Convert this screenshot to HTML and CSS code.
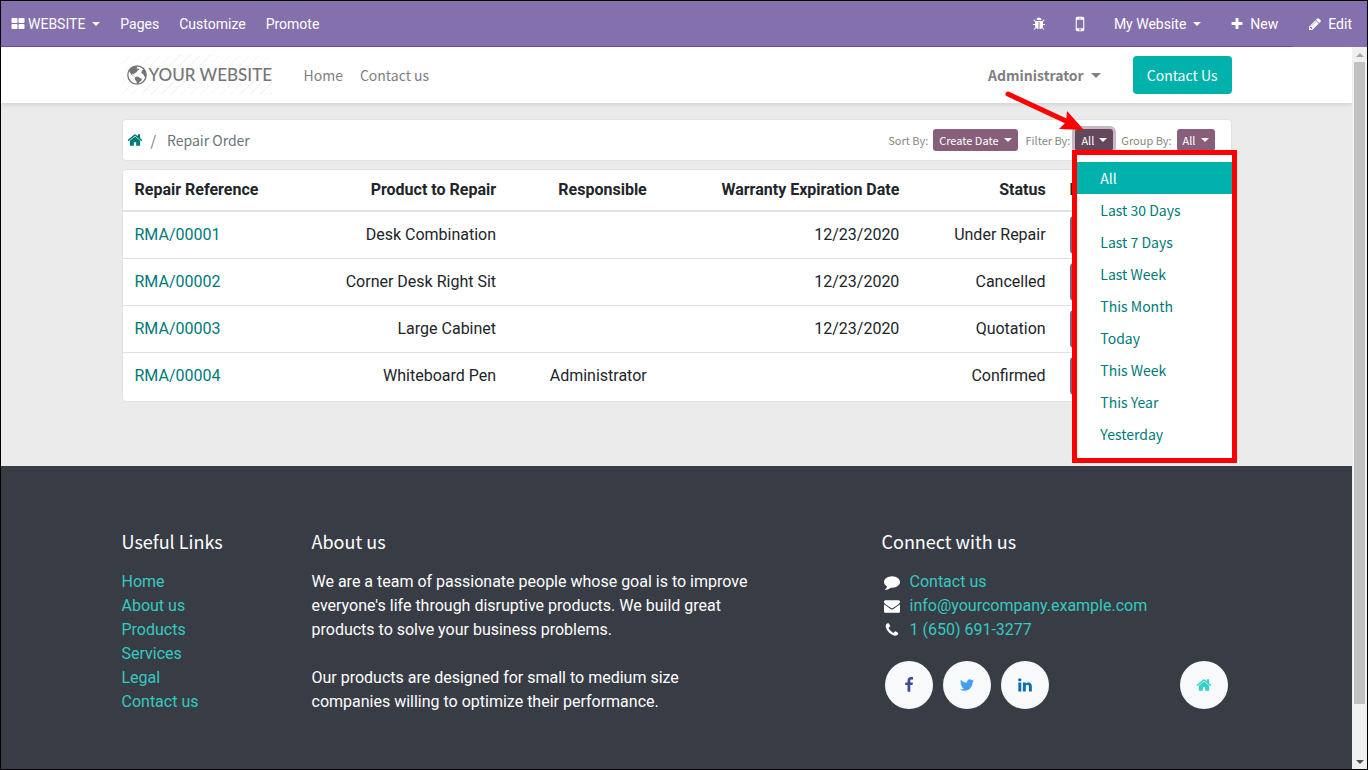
FILE: index.html
```html
<!DOCTYPE html>
<html lang="en">
<head>
<meta charset="utf-8">
<meta name="viewport" content="width=device-width, initial-scale=1">
<title>Repair Order | My Website</title>
<link rel="stylesheet" href="styles.css">
</head>
<body>
<svg class="sprite" aria-hidden="true">
  <symbol id="i-grid" viewBox="0 0 1792 1792"><path d="M832 1024v384q0 52-38 90t-90 38h-512q-52 0-90-38t-38-90v-384q0-52 38-90t90-38h512q52 0 90 38t38 90zm0-768v384q0 52-38 90t-90 38h-512q-52 0-90-38t-38-90v-384q0-52 38-90t90-38h512q52 0 90 38t38 90zm896 768v384q0 52-38 90t-90 38h-512q-52 0-90-38t-38-90v-384q0-52 38-90t90-38h512q52 0 90 38t38 90zm0-768v384q0 52-38 90t-90 38h-512q-52 0-90-38t-38-90v-384q0-52 38-90t90-38h512q52 0 90 38t38 90z"/></symbol>
  <symbol id="i-bug" viewBox="0 0 1792 1792"><path d="M1696 960q0 26-19 45t-45 19h-224q0 171-67 290l208 209q19 19 19 45t-19 45q-18 19-45 19t-45-19l-198-197q-5 5-15 13t-42 28.500-65 36.500-82 29-97 13v-896h-128v896q-51 0-101.500-13.500t-87-33-66-39-43.500-32.500l-15-14-183 207q-20 21-48 21-24 0-43-16-19-18-20.500-44.500t15.500-46.500l202-227q-58-114-58-274h-224q-26 0-45-19t-19-45 19-45 45-19h224v-294l-173-173q-19-19-19-45t19-45 45-19 45 19l173 173h844l173-173q19-19 45-19t45 19 19 45-19 45l-173 173v294h224q26 0 45 19t19 45zm-480-576h-640q0-133 93.500-226.500t226.500-93.500 226.500 93.500 93.500 226.500z"/></symbol>
  <symbol id="i-mobile" viewBox="0 0 1792 1792"><path d="M976 1408q0-33-23.500-56.500t-56.500-23.500-56.500 23.500-23.500 56.500 23.500 56.500 56.500 23.500 56.500-23.500 23.500-56.500zm208-160v-704q0-13-9.500-22.500t-22.500-9.500h-512q-13 0-22.500 9.500t-9.500 22.500v704q0 13 9.500 22.500t22.500 9.500h512q13 0 22.500-9.500t9.500-22.500zm-192-848q0-16-16-16h-160q-16 0-16 16t16 16h160q16 0 16-16zm288-16v1024q0 52-38 90t-90 38h-512q-52 0-90-38t-38-90v-1024q0-52 38-90t90-38h512q52 0 90 38t38 90z"/></symbol>
  <symbol id="i-plus" viewBox="0 0 1792 1792"><path d="M1600 736v192q0 40-28 68t-68 28h-416v416q0 40-28 68t-68 28h-192q-40 0-68-28t-28-68v-416h-416q-40 0-68-28t-28-68v-192q0-40 28-68t68-28h416v-416q0-40 28-68t68-28h192q40 0 68 28t28 68v416h416q40 0 68 28t28 68z"/></symbol>
  <symbol id="i-pencil" viewBox="0 0 1792 1792"><path d="M491 1536l91-91-235-235-91 91v107h128v128h107zm523-928q0-22-22-22-10 0-17 7l-542 542q-7 7-7 17 0 22 22 22 10 0 17-7l542-542q7-7 7-17zm-54-192l416 416-832 832h-416v-416zm683 96q0 53-37 90l-166 166-416-416 166-165q36-38 90-38 53 0 91 38l235 234q37 39 37 91z"/></symbol>
  <symbol id="i-home" viewBox="0 0 1792 1792"><path d="M1472 992v480q0 26-19 45t-45 19h-384v-384h-256v384h-384q-26 0-45-19t-19-45v-480q0-1 .5-3t.5-3l575-474 575 474q1 2 1 6zm223-69l-62 74q-8 9-21 11h-3q-13 0-21-7l-692-577-692 577q-12 8-24 7-13-2-21-11l-62-74q-8-10-7-23.500t11-21.500l719-599q32-26 76-26t76 26l244 204v-195q0-14 9-23t23-9h192q14 0 23 9t9 23v408l219 182q10 8 11 21.500t-7 23.500z"/></symbol>
  <symbol id="i-comment" viewBox="0 0 1792 1792"><path d="M1792 896q0 174-120 321.500t-326 233-450 85.500q-70 0-145-8-198 175-460 242-49 14-114 22-17 2-30.500-9t-17.500-29v-1q-3-4-.5-12t2-10 4.500-9.500l6-9 7-8.500 8-9q7-8 31-34.500t34.500-38 31-39.500 32.500-51 27-59 26-76q-157-89-247.500-220t-90.500-281q0-130 71-248.500t191-204.500 286-136.500 348-50.500q244 0 450 85.500t326 233 120 321.500z"/></symbol>
  <symbol id="i-envelope" viewBox="0 0 1792 1792"><path d="M1792 710v794q0 66-47 113t-113 47h-1472q-66 0-113-47t-47-113v-794q44 49 101 87 362 246 497 345 57 42 92.500 65.500t94.500 48 110 24.500h2q51 0 110-24.500t94.500-48 92.500-65.500q170-123 498-345 57-39 100-87zm0-294q0 79-49 151t-122 123q-376 261-468 325-10 7-42.500 31t-54 38.500-52 32.500-57.500 27-50 9h-2q-23 0-50-9t-57.500-27-52-32.500-54-38.500-42.500-31q-91-64-262-182.500t-205-142.500q-62-42-117-115.500t-55-136.500q0-78 41.500-130t118.500-52h1472q65 0 112.500 47t47.500 113z"/></symbol>
  <symbol id="i-phone" viewBox="0 0 1792 1792"><path d="M1600 1240q0 27-10 70.500t-21 68.500q-21 50-122 106-94 51-186 51-27 0-53-3.500t-57.500-12.500-47-14.500-55.500-20.500-49-18q-98-35-175-83-127-79-264-216t-216-264q-48-77-83-175-3-9-18-49t-20.500-55.500-14.500-47-12.500-57.500-3.500-53q0-92 51-186 56-101 106-122 25-11 68.500-21t70.500-10q14 0 21 3 18 6 53 76 11 19 30 54t35 63.500 31 53.500q3 4 17.500 25t21.500 35.500 7 28.500q0 20-28.500 50t-62 55-62 53-28.500 46q0 9 5 22.500t8.500 20.500 14 24 11.500 19q76 137 174 235t235 174q2 1 19 11.500t24 14 20.500 8.500 22.500 5q18 0 46-28.500t53-62 55-62 50-28.500q14 0 28.500 7t35.500 21.500 25 17.500q25 15 53.500 31t63.500 35 54 30q70 35 76 53 3 7 3 21z"/></symbol>
  <symbol id="i-facebook" viewBox="0 0 1792 1792"><path d="M1343 12v264h-157q-86 0-116 36t-30 108v189h293l-39 296h-254v759h-306v-759h-255v-296h255v-218q0-186 104-288.500t277-102.500q147 0 228 12z"/></symbol>
  <symbol id="i-twitter" viewBox="0 0 1792 1792"><path d="M1684 408q-67 98-162 167 1 14 1 42 0 130-38 259.500t-115.500 248.500-184.500 210.500-258 146-323 54.500q-271 0-496-145 35 4 78 4 225 0 401-138-105-2-188-64.500t-114-159.500q33 5 61 5 43 0 85-11-112-23-185.500-111.500t-73.500-205.500v-4q68 38 146 41-66-44-105-115t-39-154q0-88 44-163 121 149 294.500 238.500t371.500 99.500q-8-38-8-74 0-134 94.500-228.500t228.500-94.500q140 0 236 102 109-21 205-78-37 115-142 178 93-10 186-50z"/></symbol>
  <symbol id="i-linkedin" viewBox="0 0 1792 1792"><path d="M477 625v991h-330v-991h330zm21-306q1 73-50.500 122t-135.500 49h-2q-82 0-132-49t-50-122q0-74 51.500-122.500t134.500-48.500 133 48.500 51 122.500zm1166 729v568h-329v-530q0-105-40.500-164.500t-126.500-59.500q-63 0-105.500 34.500t-63.500 85.500q-11 30-11 81v553h-329q2-399 2-647t-1-296l-1-48h329v144h-2q20-32 41-56t56.500-52 87-43.500 114.500-15.500q171 0 275 113.500t104 332.500z"/></symbol>
  <symbol id="i-globe" viewBox="0 0 20 20"><circle cx="10" cy="10" r="9.200" fill="none" stroke="currentColor" stroke-width="1.300"/><path d="M2 5.500 4 3 7 1.200 9.500 1l1 1.300-1.200.7 1 .8 1.200-.4.800 1.200-2 1.300-1.300 1.800-1.500.5-.2 1.300-1.500-.8-.8 1 1.300.8.400 1.300 1.600.4L7 11.500 4.500 9.800 2.800 7.500zM8 12l2.500-.6 2.700 1.600 1.800.8-.9 2.200-1.800 1.300-1 1.600-1.300.2-.6-2.800-1.600-2zM14 2l3 2 1.800 3 .5 3-.8 2.400-1.200-1-.8-2-1.500-.6-.6-1.800.8-1.800 1.400-1-1.200-1z"/></symbol>
</svg>
<div class="window">
  <nav class="topbar" aria-label="Editor">
    <div class="topbar-group">
      <button class="top-item brand" type="button"><svg class="icon"><use href="#i-grid"/></svg>WEBSITE<span class="caret"></span></button>
      <a class="top-item" href="#">Pages</a>
      <a class="top-item" href="#">Customize</a>
      <a class="top-item" href="#">Promote</a>
    </div>
    <div class="topbar-right">
      <button class="top-item tool" type="button" aria-label="Debug"><svg class="icon"><use href="#i-bug"/></svg></button>
      <button class="top-item tool" type="button" aria-label="Mobile preview"><svg class="icon icon-lg"><use href="#i-mobile"/></svg></button>
      <button class="top-item tool site" type="button">My Website<span class="caret"></span></button>
      <a class="top-item action" href="#"><svg class="icon"><use href="#i-plus"/></svg>New</a>
      <a class="top-item action edit" href="#"><svg class="icon"><use href="#i-pencil"/></svg>Edit</a>
    </div>
  </nav>
  <div class="viewport">
    <div class="page">
      <header class="site-header">
        <div class="container header-row">
          <a class="logo" href="#"><svg class="globe"><use href="#i-globe"/></svg>YOUR WEBSITE</a>
          <nav class="site-nav" aria-label="Main">
            <a href="#">Home</a>
            <a href="#">Contact us</a>
          </nav>
          <button class="user" type="button">Administrator<span class="caret"></span></button>
          <a class="cta" href="#">Contact Us</a>
        </div>
      </header>
      <main class="content">
        <div class="container">
          <div class="card crumbs">
            <a class="crumb-home" href="#" aria-label="Home"><svg class="icon"><use href="#i-home"/></svg></a>
            <span class="slash">/</span>
            <span class="crumb">Repair Order</span>
            <div class="filters">
              <div class="filter"><span>Sort By:</span><button class="pill" type="button">Create Date<span class="caret"></span></button></div>
              <div class="filter"><span>Filter By:</span><button class="pill active" type="button" aria-expanded="true">All<span class="caret"></span></button>
                <ul class="menu">
                  <li><a class="selected" href="#">All</a></li>
                  <li><a href="#">Last 30 Days</a></li>
                  <li><a href="#">Last 7 Days</a></li>
                  <li><a href="#">Last Week</a></li>
                  <li><a href="#">This Month</a></li>
                  <li><a href="#">Today</a></li>
                  <li><a href="#">This Week</a></li>
                  <li><a href="#">This Year</a></li>
                  <li><a href="#">Yesterday</a></li>
                </ul>
                <svg class="arrow" viewBox="0 0 80 40" aria-hidden="true"><path d="M4 4 62 31" fill="none" stroke="#f00" stroke-width="5" stroke-linecap="round"/><path d="M80 40 55 39 62 32 63 21z" fill="#f00"/></svg>
              </div>
              <div class="filter"><span>Group By:</span><button class="pill" type="button">All<span class="caret"></span></button></div>
            </div>
          </div>
          <div class="card table-card">
            <table>
              <colgroup><col class="c-ref"><col class="c-product"><col class="c-person"><col class="c-date"><col class="c-status"><col></colgroup>
              <thead><tr><th>Repair Reference</th><th>Product to Repair</th><th>Responsible</th><th>Warranty Expiration Date</th><th>Status</th><th class="last">P</th></tr></thead>
              <tbody>
                <tr><td><a href="#">RMA/00001</a></td><td>Desk Combination</td><td></td><td>12/23/2020</td><td>Under Repair</td><td class="last"><button class="print" type="button" aria-label="Print"></button></td></tr>
                <tr><td><a href="#">RMA/00002</a></td><td>Corner Desk Right Sit</td><td></td><td>12/23/2020</td><td>Cancelled</td><td class="last"><button class="print" type="button" aria-label="Print"></button></td></tr>
                <tr><td><a href="#">RMA/00003</a></td><td>Large Cabinet</td><td></td><td>12/23/2020</td><td>Quotation</td><td class="last"><button class="print" type="button" aria-label="Print"></button></td></tr>
                <tr><td><a href="#">RMA/00004</a></td><td>Whiteboard Pen</td><td>Administrator</td><td></td><td>Confirmed</td><td class="last"><button class="print" type="button" aria-label="Print"></button></td></tr>
              </tbody>
            </table>
          </div>
        </div>
      </main>
      <footer class="footer">
        <div class="container footer-grid">
          <section>
            <h5>Useful Links</h5>
            <ul class="links">
              <li><a href="#">Home</a></li><li><a href="#">About us</a></li><li><a href="#">Products</a></li><li><a href="#">Services</a></li><li><a href="#">Legal</a></li><li><a href="#">Contact us</a></li>
            </ul>
          </section>
          <section class="about">
            <h5>About us</h5>
            <p>We are a team of passionate people whose goal is to improve everyone's life through disruptive products. We build great products to solve your business problems.</p>
            <p>Our products are designed for small to medium size companies willing to optimize their performance.</p>
          </section>
          <section>
            <h5>Connect with us</h5>
            <ul class="links contact">
              <li><svg class="icon"><use href="#i-comment"/></svg><a href="#">Contact us</a></li>
              <li><svg class="icon"><use href="#i-envelope"/></svg><a href="#">info@yourcompany.example.com</a></li>
              <li><svg class="icon"><use href="#i-phone"/></svg><a href="#">1 (650) 691-3277</a></li>
            </ul>
            <div class="social">
              <a class="fb" href="#" aria-label="Facebook"><svg class="icon"><use href="#i-facebook"/></svg></a>
              <a class="tw" href="#" aria-label="Twitter"><svg class="icon"><use href="#i-twitter"/></svg></a>
              <a class="li" href="#" aria-label="LinkedIn"><svg class="icon"><use href="#i-linkedin"/></svg></a>
              <a class="hm" href="#" aria-label="Home"><svg class="icon"><use href="#i-home"/></svg></a>
            </div>
          </section>
        </div>
      </footer>
    </div>
    <div class="scrollbar" aria-hidden="true"><span class="up"></span><span class="thumb"></span><span class="down"></span></div>
  </div>
</div>
</body>
</html>
```

FILE: styles.css
```css
* { box-sizing: border-box; }
body { margin: 0; font: 16px/24px Roboto, sans-serif; color: #212529; }
a { color: #007a77; text-decoration: none; }
button { font: inherit; color: inherit; background: none; border: 0; padding: 0; cursor: pointer; }
ul { list-style: none; margin: 0; padding: 0; }
.sprite { position: absolute; width: 0; height: 0; }
.icon { width: 16px; height: 16px; fill: currentColor; flex: none; }
.caret { display: inline-block; border: 4px solid transparent; border-top-color: currentColor; border-bottom: 0; margin-left: 7px; vertical-align: 3px; }

.window { display: flex; flex-direction: column; min-height: 100vh; border: 1px solid #000; }

.topbar { display: flex; justify-content: space-between; height: 46px; background: #8470ad; border-bottom: 1px solid #6650a0; color: #fff; font-size: 14px; }
.topbar-group { display: flex; align-items: center; gap: 20px; padding-left: 10px; }
.topbar-right { display: flex; height: 46px; }
.top-item { display: flex; align-items: center; color: #fff; }
.topbar .icon { width: 14px; height: 14px; }
.topbar .icon-lg { width: 20px; height: 20px; }
.brand .icon { margin-right: 3px; }
.tool { padding: 0 12px; }
.site { padding-right: 14px; }
.action { padding: 0 15px; }
.action .icon { margin-right: 6px; }
.edit { background: #8470ad; }

.viewport { display: flex; flex: 1; }
.page { flex: 1; display: flex; flex-direction: column; background: #ebebeb; }
.container { width: 100%; max-width: 1140px; margin: 0 auto; padding: 0 15px; }

.site-header { background: #fff; box-shadow: 0 2px 4px rgba(0, 0, 0, .1); font: 14px/24px "Noto Sans CJK SC", sans-serif; }
.header-row { display: flex; align-items: center; height: 56px; }
.logo { display: flex; align-items: center; gap: 2px; width: 150px; height: 40px; padding-left: 5px; color: #757575; font: 500 17px/24px Lato, sans-serif; white-space: nowrap; background: repeating-linear-gradient(135deg, #fff 0 6px, #f5f5f5 6px 7px); }
.globe { width: 20px; height: 20px; fill: currentColor; flex: none; }
.site-nav { display: flex; gap: 17px; margin-left: 32px; }
.site-nav a { color: #7f7f7f; }
.user { margin-left: auto; margin-right: 32px; color: #7f7f7f; font-weight: 700; }
.user .caret { border-width: 5px 5px 0; }
.cta { padding: 7px 14px; border-radius: 4px; background: #00b2ab; color: #fff; }

.content { padding: 16px 0 64px; }
.card { background: #fff; border: 1px solid #dee2e6; border-radius: 4px; }
.crumbs { display: flex; align-items: center; height: 42px; padding: 0 16px 0 4px; margin-bottom: 8px; font: 14px/24px "Noto Sans CJK SC", sans-serif; color: #6c757d; }
.crumb-home { display: flex; }
.slash { margin: 0 11px 0 8px; }
.filters { display: flex; gap: 8px; margin-left: auto; font-size: 11px; color: #868686; }
.filter { position: relative; display: flex; align-items: center; gap: 5px; }
.pill { padding: 0 6px; height: 22px; line-height: 22px; border-radius: 3px; background: #875f7b; color: #fff; }
.pill .caret { margin-left: 5px; }
.pill.active { background: #65475c; box-shadow: 0 0 0 3px #c9b8c4; }
.menu { position: absolute; z-index: 2; top: 22px; right: -124px; width: 165px; padding: 7px 0 8px; background: #fff; border: 5px solid #f00; font-size: 14px; line-height: 24px; }
.menu a { display: block; padding: 4px 23px; }
.menu .selected { background: #00b2ab; color: #fff; }
.arrow { position: absolute; z-index: 3; right: 29px; bottom: 22px; width: 80px; height: 40px; }

.table-card { padding-bottom: 2px; }
table { width: 100%; table-layout: fixed; border-collapse: separate; border-spacing: 0; }
.c-ref { width: 14%; }
.c-product { width: 20.800%; }
.c-person { width: 13.600%; }
.c-date { width: 22.800%; }
.c-status { width: 13.200%; }
th, td { padding: 4px 12px; text-align: right; white-space: nowrap; }
th { padding: 8px 12px; border-bottom: 2px solid #dee2e6; font-weight: 700; }
td { height: 46px; }
tr + tr td { height: 47px; border-top: 1px solid #dee2e6; }
th:first-child, td:first-child, .last { text-align: left; }
.print { display: block; width: 60px; height: 38px; border-radius: 4px; background: #875f7b; }

.footer { flex: 1; padding: 64px 0 24px; background: #383c45; color: #fff; }
.footer-grid { display: grid; grid-template-columns: 2fr 6fr 4fr; padding: 0; }
.footer-grid section { padding: 0 15px; }
h5 { margin: 0 0 18px; font: 18px/22px "Noto Sans CJK SC", sans-serif; }
.about p { margin: 0 96px 24px 0; }
.links a { color: #35c9c2; }
.contact li { display: flex; align-items: center; gap: 10px; padding-left: 2px; }
.contact .icon { width: 16px; height: 16px; }
.social { display: flex; gap: 10px; margin-top: 19px; padding: 0 4px 0 3px; }
.social a { display: flex; align-items: center; justify-content: center; width: 48px; height: 48px; border-radius: 50%; background: #f8f9fa; }
.fb { color: #3b4a9c; }
.tw { color: #479eee; }
.li { color: #0f6cb5; }
.social .hm { margin-left: auto; color: #35d0c8; }

.scrollbar { display: flex; flex-direction: column; align-items: center; width: 15px; padding: 6px 0 5px; background: #f0f0f0; }
.up { border: 4px solid transparent; border-bottom-color: #a3a3a3; border-top: 0; }
.thumb { flex: 1; width: 11px; margin: 5px 0 56px; background: #c1c1c1; }
.down { border: 4px solid transparent; border-top-color: #505050; border-bottom: 0; }
```
